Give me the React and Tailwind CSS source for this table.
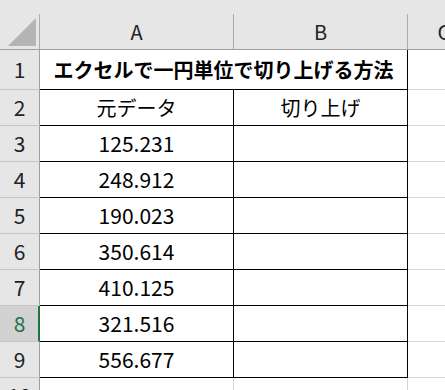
const values = ['125.231', '248.912', '190.023', '350.614', '410.125', '321.516', '556.677'];

const font = { fontFamily: '"Noto Sans CJK JP", "Noto Sans", sans-serif' };

function RowHead({ n, selected }) {
  return (
    <div
      className={
        selected
          ? 'flex w-[40px] shrink-0 items-center justify-center border-b border-b-[#c4c4c4] border-r-2 border-r-[#217346] bg-[#d2d2d2] pl-[1px] text-[21px] text-[#217346]'
          : 'flex w-[40px] shrink-0 items-center justify-center border-b border-b-[#c4c4c4] border-r border-r-[#9f9f9f] bg-[#e6e6e6] text-[21px] text-[#222]'
      }
    >
      {n}
    </div>
  );
}

export default function App() {
  return (
    <div className="h-[390px] w-[445px] overflow-hidden bg-white text-black" style={font}>
      {/* column headers */}
      <div className="h-[14px] bg-[#e6e6e6]" />
      <div className="flex h-[36px] border-b border-[#a0a0a0] bg-[#e6e6e6] text-[20px] text-[#222]">
        <div className="relative w-[40px] shrink-0 border-r border-[#ababab]">
          <svg className="absolute left-0 top-0" width="40" height="35">
            <polygon points="36,4 36,32 8,32" fill="#b4b4b4" />
          </svg>
        </div>
        <div className="flex w-[194px] shrink-0 items-center justify-center border-r border-[#ababab]">A</div>
        <div className="flex w-[174px] shrink-0 items-center justify-center border-r border-[#ababab]">B</div>
        <div className="flex w-[72px] shrink-0 items-center justify-center">C</div>
      </div>

      {/* row 1: merged title */}
      <div className="flex h-[40px]">
        <RowHead n={1} />
        <div className="flex w-[368px] shrink-0 items-center justify-center border-b border-r border-black text-[20px] font-bold">
          エクセルで一円単位で切り上げる方法
        </div>
        <div className="w-[72px] shrink-0 border-b border-[#d4d4d4]" />
      </div>

      {/* row 2: headings */}
      <div className="flex h-[36px]">
        <RowHead n={2} />
        <div className="flex w-[194px] shrink-0 items-center justify-center border-b border-r border-black text-[20px]">元データ</div>
        <div className="flex w-[174px] shrink-0 items-center justify-center border-b border-r border-black text-[20px]">切り上げ</div>
        <div className="w-[72px] shrink-0 border-b border-[#d4d4d4]" />
      </div>

      {values.map((v, i) => (
        <div key={v} className="flex h-[36px]">
          <RowHead n={i + 3} selected={i + 3 === 8} />
          <div className="flex w-[194px] shrink-0 items-center justify-center border-b border-r border-black text-[21px]">{v}</div>
          <div className="w-[174px] shrink-0 border-b border-r border-black" />
          <div className="w-[72px] shrink-0 border-b border-[#d4d4d4]" />
        </div>
      ))}

      {/* row 10 */}
      <div className="flex h-[36px]">
        <RowHead n={10} />
        <div className="w-[194px] shrink-0 border-r border-[#d4d4d4]" />
        <div className="w-[174px] shrink-0 border-r border-[#d4d4d4]" />
        <div className="w-[72px] shrink-0" />
      </div>
    </div>
  );
}
